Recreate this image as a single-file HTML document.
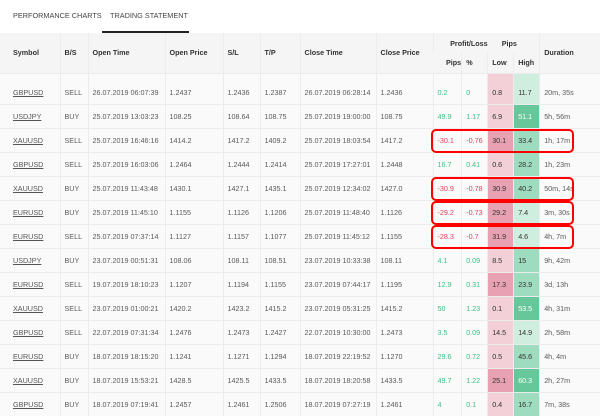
<!DOCTYPE html><html><head><style>
body{margin:0;width:600px;height:413px;overflow:hidden;background:#fff;font-family:"Liberation Sans",sans-serif;color:#5a5a5a;position:relative}
.tab{position:absolute;top:11px;font-size:7.3px;color:#444}
.ul{position:absolute;left:102px;top:31px;width:87px;height:2px;background:#222}
table{position:absolute;left:0;top:33px;width:600px;border-collapse:collapse;font-size:7.2px}
th{background:#f5f5f5;color:#333;font-weight:bold;text-align:left;padding:0 0 0 4px;border-left:1px solid #ececec}
td{padding:0 0 0 4px;border-left:1px solid #ececec;border-top:1px solid #ececec;height:23px;background:#fafafa;white-space:nowrap;overflow:hidden}
th:first-child,td:first-child{border-left:none;padding-left:13px}
tr.f td{height:23px;padding-top:7px}
.s{text-decoration:underline;color:#555}
.g{color:#3cbf84}.r{color:#e0405e}
.p1{background:#f3cfd7;color:#333}.p2{background:#e8a1b3;color:#333}
.g1{background:#cfeedf;color:#333}.g2{background:#9edcbf;color:#333}.g3{background:#66c79b;color:#fff}
.box{position:absolute;left:431px;width:139px;height:20px;border:2px solid #f00;border-radius:5px}
</style></head><body>
<div class="tab" style="left:13px">PERFORMANCE CHARTS</div>
<div class="tab" style="left:110px">TRADING STATEMENT</div>
<div class="ul"></div>
<table>
<colgroup><col style="width:60px"><col style="width:28px"><col style="width:77px"><col style="width:58px"><col style="width:37px"><col style="width:40px"><col style="width:76px"><col style="width:57px"><col style="width:26px"><col style="width:26px"><col style="width:26px"><col style="width:26px"><col></colgroup>
<tr style="height:20px"><th rowspan="2">Symbol</th><th rowspan="2">B/S</th><th rowspan="2">Open Time</th><th rowspan="2">Open Price</th><th rowspan="2">S/L</th><th rowspan="2">T/P</th><th rowspan="2">Close Time</th><th rowspan="2">Close Price</th><th colspan="2" style="text-align:right;padding-right:0">Profit/Loss</th><th colspan="2" style="padding-left:14px;border-left:none">Pips</th><th rowspan="2">Duration</th></tr>
<tr style="height:20px"><th>Pips</th><th>%</th><th>Low</th><th>High</th></tr>
<tr class="f"><td class="s">GBPUSD</td><td>SELL</td><td>26.07.2019 06:07:39</td><td>1.2437</td><td>1.2436</td><td>1.2387</td><td>26.07.2019 06:28:14</td><td>1.2436</td><td class="g">0.2</td><td class="g">0</td><td class="p1">0.8</td><td class="g1">11.7</td><td>20m, 35s</td></tr>
<tr><td class="s">USDJPY</td><td>BUY</td><td>25.07.2019 13:03:23</td><td>108.25</td><td>108.64</td><td>108.75</td><td>25.07.2019 19:00:00</td><td>108.75</td><td class="g">49.9</td><td class="g">1.17</td><td class="p1">6.9</td><td class="g3">51.1</td><td>5h, 56m</td></tr>
<tr><td class="s">XAUUSD</td><td>SELL</td><td>25.07.2019 16:46:16</td><td>1414.2</td><td>1417.2</td><td>1409.2</td><td>25.07.2019 18:03:54</td><td>1417.2</td><td class="r">-30.1</td><td class="r">-0.76</td><td class="p2">30.1</td><td class="g2">33.4</td><td>1h, 17m</td></tr>
<tr><td class="s">GBPUSD</td><td>SELL</td><td>25.07.2019 16:03:06</td><td>1.2464</td><td>1.2444</td><td>1.2414</td><td>25.07.2019 17:27:01</td><td>1.2448</td><td class="g">16.7</td><td class="g">0.41</td><td class="p1">0.6</td><td class="g2">28.2</td><td>1h, 23m</td></tr>
<tr><td class="s">XAUUSD</td><td>BUY</td><td>25.07.2019 11:43:48</td><td>1430.1</td><td>1427.1</td><td>1435.1</td><td>25.07.2019 12:34:02</td><td>1427.0</td><td class="r">-30.9</td><td class="r">-0.78</td><td class="p2">30.9</td><td class="g2">40.2</td><td>50m, 14s</td></tr>
<tr><td class="s">EURUSD</td><td>BUY</td><td>25.07.2019 11:45:10</td><td>1.1155</td><td>1.1126</td><td>1.1206</td><td>25.07.2019 11:48:40</td><td>1.1126</td><td class="r">-29.2</td><td class="r">-0.73</td><td class="p2">29.2</td><td class="g1">7.4</td><td>3m, 30s</td></tr>
<tr><td class="s">EURUSD</td><td>SELL</td><td>25.07.2019 07:37:14</td><td>1.1127</td><td>1.1157</td><td>1.1077</td><td>25.07.2019 11:45:12</td><td>1.1155</td><td class="r">-28.3</td><td class="r">-0.7</td><td class="p2">31.9</td><td class="g1">4.6</td><td>4h, 7m</td></tr>
<tr><td class="s">USDJPY</td><td>BUY</td><td>23.07.2019 00:51:31</td><td>108.06</td><td>108.11</td><td>108.51</td><td>23.07.2019 10:33:38</td><td>108.11</td><td class="g">4.1</td><td class="g">0.09</td><td class="p1">8.5</td><td class="g2">15</td><td>9h, 42m</td></tr>
<tr><td class="s">EURUSD</td><td>SELL</td><td>19.07.2019 18:10:23</td><td>1.1207</td><td>1.1194</td><td>1.1155</td><td>23.07.2019 07:44:17</td><td>1.1195</td><td class="g">12.9</td><td class="g">0.31</td><td class="p2">17.3</td><td class="g2">23.9</td><td>3d, 13h</td></tr>
<tr><td class="s">XAUUSD</td><td>SELL</td><td>23.07.2019 01:00:21</td><td>1420.2</td><td>1423.2</td><td>1415.2</td><td>23.07.2019 05:31:25</td><td>1415.2</td><td class="g">50</td><td class="g">1.23</td><td class="p1">0.1</td><td class="g3">53.5</td><td>4h, 31m</td></tr>
<tr><td class="s">GBPUSD</td><td>SELL</td><td>22.07.2019 07:31:34</td><td>1.2476</td><td>1.2473</td><td>1.2427</td><td>22.07.2019 10:30:00</td><td>1.2473</td><td class="g">3.5</td><td class="g">0.09</td><td class="p1">14.5</td><td class="g1">14.9</td><td>2h, 58m</td></tr>
<tr><td class="s">EURUSD</td><td>BUY</td><td>18.07.2019 18:15:20</td><td>1.1241</td><td>1.1271</td><td>1.1294</td><td>18.07.2019 22:19:52</td><td>1.1270</td><td class="g">29.6</td><td class="g">0.72</td><td class="p1">0.5</td><td class="g2">45.6</td><td>4h, 4m</td></tr>
<tr><td class="s">XAUUSD</td><td>BUY</td><td>18.07.2019 15:53:21</td><td>1428.5</td><td>1425.5</td><td>1433.5</td><td>18.07.2019 18:20:58</td><td>1433.5</td><td class="g">49.7</td><td class="g">1.22</td><td class="p2">25.1</td><td class="g3">60.3</td><td>2h, 27m</td></tr>
<tr><td class="s">GBPUSD</td><td>BUY</td><td>18.07.2019 07:19:41</td><td>1.2457</td><td>1.2461</td><td>1.2506</td><td>18.07.2019 07:27:19</td><td>1.2461</td><td class="g">4</td><td class="g">0.1</td><td class="p1">0.4</td><td class="g2">16.7</td><td>7m, 38s</td></tr>
</table>
<div class="box" style="top:129px"></div>
<div class="box" style="top:177px"></div>
<div class="box" style="top:201px"></div>
<div class="box" style="top:225px"></div>
</body></html>
